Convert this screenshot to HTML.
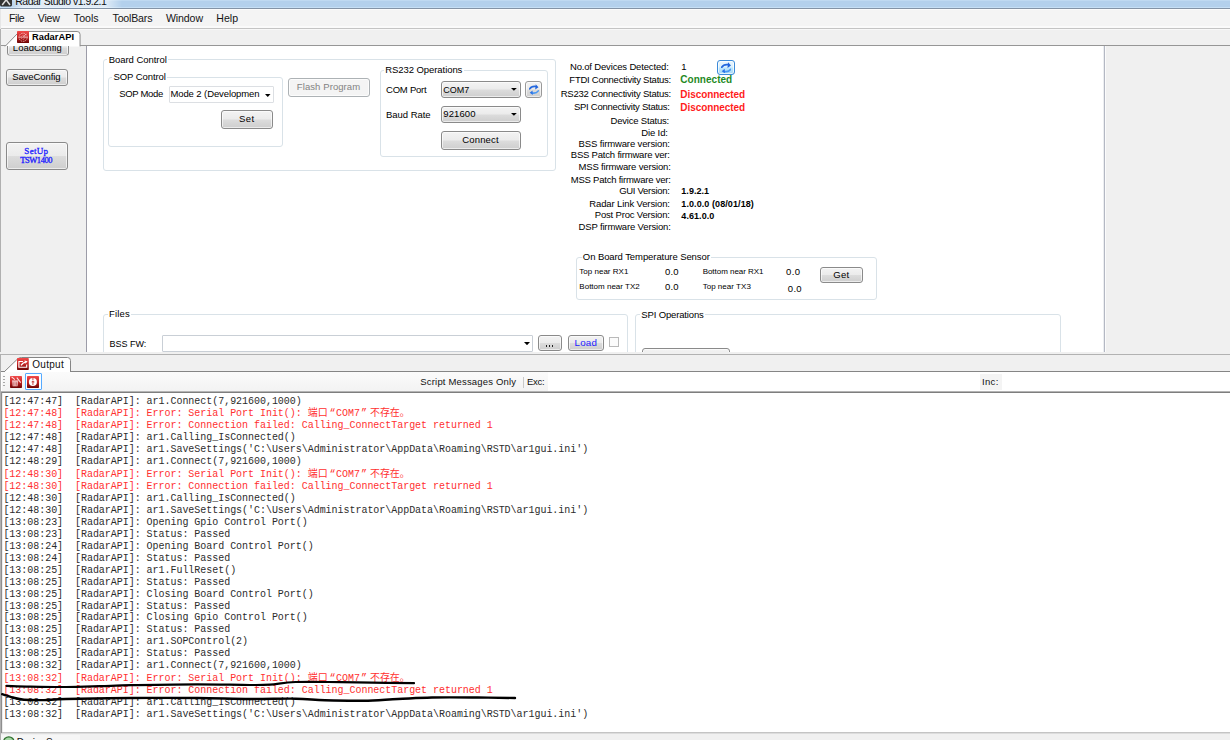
<!DOCTYPE html>
<html lang="en">
<head>
<meta charset="utf-8">
<title>Radar Studio v1.9.2.1</title>
<style>
html,body{margin:0;padding:0}
body{width:1230px;height:740px;overflow:hidden;position:relative;background:#f0f0f0;font-family:"Liberation Sans","Noto Sans CJK SC",sans-serif;font-size:9.5px;color:#000}
#win{position:absolute;left:0;top:0;width:1230px;height:740px;overflow:hidden}
#win div,#win svg,#win span,#win pre{position:absolute;box-sizing:border-box;margin:0}
#win span,#win pre{white-space:pre;line-height:12px}
.m{font-family:"Liberation Mono","Noto Sans CJK SC",monospace;font-size:10px;letter-spacing:-0.034px;left:3.4px;color:#2c2c2c}
.m.r{color:#ff3030}
.m i{font-style:normal;position:static!important}
</style>
</head>
<body>
<div id="win">
<div style="left:0px;top:0px;width:1230px;height:8px;background:#b3d0ec;"></div>
<div style="left:0px;top:0px;width:1230px;height:1px;background:#bfd9f1;"></div>
<div style="left:0px;top:7px;width:1230px;height:1px;background:#c6dff5;"></div>
<div style="left:0px;top:8px;width:1230px;height:1px;background:#8393a6;"></div>
<div style="left:10px;top:0px;width:112px;height:8px;background:linear-gradient(90deg,rgba(255,255,255,0),rgba(255,255,255,.6) 12%,rgba(255,255,255,.6) 85%,rgba(255,255,255,0));"></div>
<svg style="left:0;top:0" width="13" height="8" viewBox="0 0 13 8"><path d="M0 0 H12 V5 Q12 6.4 10.6 6.4 H1.4 Q0 6.4 0 5 Z" fill="#333"/><path d="M2.2 5 L6 0 M10 5 L6.4 0" stroke="#ddd" stroke-width="1.5" fill="none"/></svg>
<div style="left:0px;top:9px;width:1230px;height:19px;background:#f4f4f4;"></div>
<div style="left:0px;top:9px;width:1230px;height:1px;background:#fbfbfb;"></div>
<div style="left:0px;top:26px;width:1230px;height:2px;background:#fafafa;"></div>
<div style="left:0px;top:28px;width:1230px;height:1px;background:#c4c4c4;"></div>
<div style="left:0px;top:29px;width:1230px;height:16px;background:#f0f0f0;"></div>
<div style="left:0px;top:29px;width:1230px;height:1px;background:#f8f8f8;"></div>
<div style="left:0px;top:45px;width:1230px;height:1px;background:#969696;"></div>
<div style="left:0px;top:46px;width:86px;height:307px;background:#f0f0f0;"></div>
<div style="left:86px;top:46px;width:1px;height:306px;background:#9c9ca8;"></div>
<div style="left:87px;top:46px;width:1017px;height:306px;background:#fff;"></div>
<div style="left:1103px;top:46px;width:1px;height:306px;background:#eceef1;"></div>
<div style="left:1104px;top:46px;width:1px;height:306px;background:#b4b8c3;"></div>
<div style="left:1105px;top:46px;width:1px;height:306px;background:#fbfbfb;"></div>
<div style="left:1106px;top:46px;width:124px;height:306px;background:#f0f0f0;"></div>
<div style="left:0px;top:352px;width:1230px;height:2px;background:#f0f0f0;"></div>
<div style="left:0px;top:354px;width:1230px;height:1px;background:#b2b2b2;"></div>
<div style="left:0px;top:355px;width:1230px;height:16px;background:#f0f0f0;"></div>
<div style="left:0px;top:371px;width:1230px;height:1px;background:#858585;"></div>
<div style="left:0px;top:372px;width:1230px;height:19px;background:#fff;"></div>
<div style="left:2px;top:372px;width:546px;height:19px;background:linear-gradient(#fbfbfb,#f3f3f3);"></div>
<div style="left:980px;top:374px;width:22px;height:16px;background:#f4f4f4;"></div>
<div style="left:0px;top:391px;width:1230px;height:1px;background:#b4b4b4;"></div>
<div style="left:0px;top:392px;width:1230px;height:1px;background:#7e7e7e;"></div>
<div style="left:0px;top:393px;width:1230px;height:339px;background:#fff;"></div>
<div style="left:0px;top:732px;width:1230px;height:1px;background:#c4c4c4;"></div>
<div style="left:0px;top:733px;width:1230px;height:1px;background:#dcdcdc;"></div>
<div style="left:0px;top:734px;width:1230px;height:6px;background:#f0f0f0;"></div>
<div style="left:0px;top:735px;width:80px;height:5px;background:#f6f6f6;"></div>
<div style="left:0px;top:9px;width:1px;height:20px;background:#e6e6e6;"></div>
<div style="left:0px;top:29px;width:1px;height:711px;background:#b0b0b0;"></div>
<div style="left:1px;top:392px;width:1px;height:341px;background:#8e8e8e;"></div>
<div style="left:2px;top:393px;width:1px;height:339px;background:#ececec;"></div>
<svg style="left:3px;top:29.6px" width="78.6" height="17.4" viewBox="0 0 78.6 17.4"><path d="M2.0 16.4 L15.0 3.0 Q16.5 1.5 19.0 1.5 L74.1 1.5 Q77.1 1.5 77.1 4.5 L77.1 16.4 Z" fill="#fff" stroke="none"/><path d="M2.0 16.4 L15.0 3.0 Q16.5 1.5 19.0 1.5 L74.1 1.5 Q77.1 1.5 77.1 4.5 L77.1 16.4" fill="none" stroke="#8c8c8c" stroke-width="1"/></svg>
<svg style="left:2px;top:356px" width="70" height="17" viewBox="0 0 70 17"><path d="M2.0 16.0 L15.5 3.0 Q17.0 1.5 19.5 1.5 L65.5 1.5 Q68.5 1.5 68.5 4.5 L68.5 16.0 Z" fill="#fff" stroke="none"/><path d="M2.0 16.0 L15.5 3.0 Q17.0 1.5 19.5 1.5 L65.5 1.5 Q68.5 1.5 68.5 4.5 L68.5 16.0" fill="none" stroke="#858585" stroke-width="1"/></svg>
<svg style="left:17px;top:31px" width="12.3" height="12" viewBox="0 0 12.3 12"><defs><linearGradient id="rg" x1="0" y1="0" x2="0" y2="1"><stop offset="0" stop-color="#f24a4a"/><stop offset="0.5" stop-color="#c42626"/><stop offset="1" stop-color="#6c0404"/></linearGradient></defs><rect width="12.3" height="12" rx="0.8" fill="url(#rg)"/><g fill="none" stroke="#f8c6c6" opacity=".9"><circle cx="6.1" cy="6.3" r="4.1" stroke-width="0.9" stroke-dasharray="1.5 0.9"/><circle cx="6.1" cy="6.3" r="2" stroke-width="0.7" stroke-dasharray="1.2 0.8"/><path d="M1.6 6.2 H10.6" stroke-width="0.8"/><path d="M6.1 6.3 L9.2 2.8" stroke-width="1"/></g></svg>
<svg style="left:17.2px;top:357.8px" width="11.8" height="12" viewBox="0 0 11.8 12"><rect width="11.8" height="12" rx="0.8" fill="url(#rg)"/><path d="M6 3.5 H1.9 V9.3 H9.7 V6.6" fill="none" stroke="#fff" stroke-width="1.15"/><path d="M4 7.3 Q5.6 4.6 8.4 4.1" fill="none" stroke="#fff" stroke-width="1.4"/><path d="M7.4 2.6 L10.6 3.3 L8.6 5.7 Z" fill="#fff"/></svg>
<div style="left:3px;top:376px;width:1.5px;height:1.2px;background:#a8a8a8;"></div><div style="left:3px;top:379px;width:1.5px;height:1.2px;background:#a8a8a8;"></div><div style="left:3px;top:382px;width:1.5px;height:1.2px;background:#a8a8a8;"></div><div style="left:3px;top:385px;width:1.5px;height:1.2px;background:#a8a8a8;"></div>
<svg style="left:10px;top:375.6px" width="12" height="12" viewBox="0 0 12 12"><rect width="12" height="12" rx="0.8" fill="url(#rg)"/><path d="M2.3 5.6 H7.9 L7.5 10.2 H2.7 Z" fill="#f6d2d2"/><path d="M2 5 H8.2" stroke="#fff" stroke-width="0.9"/><path d="M1.6 0.9 L4.9 3.6 M6.8 1.6 L10.7 6.7" stroke="#fbe4e4" stroke-width="1.1"/><path d="M3.7 6.2 V9.8 M5.1 6.2 V9.8 M6.5 6.2 V9.8" stroke="#b02a2a" stroke-width="0.55"/></svg>
<div style="left:24.8px;top:373.2px;width:17.2px;height:16.6px;border:1.4px solid #55aaff;border-radius:1px;background:#fbfdff;"></div>
<svg style="left:27px;top:375.6px" width="12" height="12" viewBox="0 0 12 12"><rect width="12" height="12" rx="0.8" fill="url(#rg)"/><circle cx="5.9" cy="6" r="4" fill="#fff"/><path d="M5.9 2.2 V9.8" stroke="#c43030" stroke-width="1.2" stroke-dasharray="1.5 1"/><path d="M4.7 6 H7.3" stroke="#c43030" stroke-width="1.1"/></svg>
<div style="left:523px;top:377px;width:1px;height:11px;background:#c9c9c9;"></div>
<div style="left:7px;top:39px;width:62px;height:16.5px;border:1px solid #8a8a8a;border-radius:3px;background:linear-gradient(#f3f3f3 0,#ebebeb 48%,#dcdcdc 52%,#cecece 100%);box-shadow:inset 0 0 0 .8px rgba(255,255,255,.8);clip-path:inset(7px 0 0 0);"></div>
<div style="left:6px;top:69px;width:62px;height:16.5px;border:1px solid #8a8a8a;border-radius:3px;background:linear-gradient(#f3f3f3 0,#ebebeb 48%,#dcdcdc 52%,#cecece 100%);box-shadow:inset 0 0 0 .8px rgba(255,255,255,.8);"></div>
<div style="left:6px;top:141.5px;width:62px;height:28px;border:1px solid #8a8a8a;border-radius:3px;background:linear-gradient(#f3f3f3 0,#ebebeb 48%,#dcdcdc 52%,#cecece 100%);box-shadow:inset 0 0 0 .8px rgba(255,255,255,.8);"></div>
<div style="left:102.5px;top:59px;width:453.5px;height:111.5px;border:1px solid #d9e2e8;border-radius:3px;"></div><div style="left:107.3px;top:58px;width:60.89999999999999px;height:3px;background:#fff;"></div>
<div style="left:108px;top:76.5px;width:175px;height:70.5px;border:1px solid #d9e2e8;border-radius:3px;"></div><div style="left:112.2px;top:75.5px;width:54.999999999999986px;height:3px;background:#fff;"></div>
<div style="left:169px;top:86px;width:105px;height:17px;border:1px solid #dcdfe3;background:#fff;border-radius:1px;"></div>
<svg style="left:265px;top:93.5px" width="5.5" height="3" viewBox="0 0 5.5 3"><path d="M0 0 H5.5 L2.75 3 Z" fill="#000"/></svg>
<div style="left:220.5px;top:110px;width:52.5px;height:19px;border:1px solid #8a8a8a;border-radius:3px;background:linear-gradient(#f3f3f3 0,#ebebeb 48%,#dcdcdc 52%,#cecece 100%);box-shadow:inset 0 0 0 .8px rgba(255,255,255,.8);"></div>
<div style="left:288px;top:78px;width:82px;height:18.5px;border:1px solid #adb2b5;border-radius:3px;background:#f4f4f4;box-shadow:inset 0 0 0 1px #fcfcfc;"></div>
<div style="left:379.5px;top:69.5px;width:168.5px;height:87px;border:1px solid #d9e2e8;border-radius:3px;"></div><div style="left:384px;top:68.5px;width:79.69999999999999px;height:3px;background:#fff;"></div>
<div style="left:440.5px;top:81px;width:80.5px;height:16.5px;border:1px solid #8a8a8a;border-radius:3px;background:linear-gradient(#f3f3f3 0,#ebebeb 48%,#dcdcdc 52%,#cecece 100%);box-shadow:inset 0 0 0 .8px rgba(255,255,255,.8);"></div>
<svg style="left:511px;top:88.3px" width="5.8" height="2.8" viewBox="0 0 5.8 2.8"><path d="M0 0 H5.8 L2.9 2.8 Z" fill="#000"/></svg>
<div style="left:525px;top:81.3px;width:16.8px;height:16.4px;border:1px solid #8a8a8a;border-radius:3px;background:linear-gradient(#f3f3f3 0,#ebebeb 48%,#dcdcdc 52%,#cecece 100%);box-shadow:inset 0 0 0 .8px rgba(255,255,255,.8);border-color:#999;"></div>
<svg style="left:528.5px;top:84px" width="10" height="11.0" viewBox="0 0 10 11"><path d="M0.7 4.9 Q2.6 1.9 6.8 2.5" fill="none" stroke="#2468de" stroke-width="1.7" stroke-linecap="round"/><path d="M6.7 0.3 L9.5 3.2 L6.2 5.6 Z" fill="#1f63dc"/><path d="M9.3 6.9 Q7.2 9.8 3.2 9" fill="none" stroke="#4a98f2" stroke-width="1.6" stroke-linecap="round"/><path d="M3.5 6.5 L0.7 8.7 L3.8 10.9 Z" fill="#2a72e6"/></svg>
<div style="left:440.5px;top:105.5px;width:80.5px;height:17px;border:1px solid #8a8a8a;border-radius:3px;background:linear-gradient(#f3f3f3 0,#ebebeb 48%,#dcdcdc 52%,#cecece 100%);box-shadow:inset 0 0 0 .8px rgba(255,255,255,.8);"></div>
<svg style="left:511px;top:112.8px" width="5.8" height="2.8" viewBox="0 0 5.8 2.8"><path d="M0 0 H5.8 L2.9 2.8 Z" fill="#000"/></svg>
<div style="left:441px;top:131px;width:80px;height:18.5px;border:1px solid #8a8a8a;border-radius:3px;background:linear-gradient(#f3f3f3 0,#ebebeb 48%,#dcdcdc 52%,#cecece 100%);box-shadow:inset 0 0 0 .8px rgba(255,255,255,.8);"></div>
<div style="left:716.5px;top:60px;width:18.5px;height:15px;border:1px solid #3c8ad8;border-radius:3px;background:linear-gradient(#eaf6fd,#d9f0fc 48%,#bee6fd 52%,#a7d9f5);box-shadow:inset 0 0 0 1px rgba(255,255,255,.7);"></div>
<svg style="left:720.8px;top:61.6px" width="10.5" height="11.6" viewBox="0 0 10 11"><path d="M0.7 4.9 Q2.6 1.9 6.8 2.5" fill="none" stroke="#2468de" stroke-width="1.7" stroke-linecap="round"/><path d="M6.7 0.3 L9.5 3.2 L6.2 5.6 Z" fill="#1f63dc"/><path d="M9.3 6.9 Q7.2 9.8 3.2 9" fill="none" stroke="#4a98f2" stroke-width="1.6" stroke-linecap="round"/><path d="M3.5 6.5 L0.7 8.7 L3.8 10.9 Z" fill="#2a72e6"/></svg>
<div style="left:576px;top:256.5px;width:301px;height:43px;border:1px solid #d9e2e8;border-radius:3px;"></div><div style="left:581.5px;top:255.5px;width:129.70000000000005px;height:3px;background:#fff;"></div>
<div style="left:820.3px;top:267px;width:42.5px;height:15.5px;border:1px solid #8a8a8a;border-radius:3px;background:linear-gradient(#f3f3f3 0,#ebebeb 48%,#dcdcdc 52%,#cecece 100%);box-shadow:inset 0 0 0 .8px rgba(255,255,255,.8);"></div>
<div style="left:87px;top:300px;width:1017px;height:52px;overflow:hidden;"><div style="left:15.5px;top:14px;width:525px;height:60px;border:1px solid #d9e2e8;border-radius:3px;"></div><div style="left:20.599999999999994px;top:13px;width:23.5px;height:3px;background:#fff;"></div><div style="left:548.3px;top:14px;width:425.5px;height:60px;border:1px solid #d9e2e8;border-radius:3px;"></div><div style="left:553px;top:13px;width:65.2px;height:3px;background:#fff;"></div><div style="left:74.5px;top:34.5px;width:371.5px;height:17px;border:1px solid #c9cfd6;background:#fff;border-radius:1px;"></div><div style="left:451.4px;top:35.39999999999998px;width:23.2px;height:15.3px;border:1px solid #8a8a8a;border-radius:3px;background:linear-gradient(#f3f3f3 0,#ebebeb 48%,#dcdcdc 52%,#cecece 100%);box-shadow:inset 0 0 0 .8px rgba(255,255,255,.8);"></div><div style="left:481.29999999999995px;top:35.39999999999998px;width:35.3px;height:15.3px;border:1px solid #8a8a8a;border-radius:3px;background:linear-gradient(#f3f3f3 0,#ebebeb 48%,#dcdcdc 52%,#cecece 100%);box-shadow:inset 0 0 0 .8px rgba(255,255,255,.8);"></div><div style="left:522px;top:37px;width:10px;height:9.6px;border:1px solid #b9b9b9;background:#fbfbfb;"></div><div style="left:554.6px;top:48.30000000000001px;width:88px;height:16px;border:1px solid #8a8a8a;border-radius:3px;background:linear-gradient(#f3f3f3 0,#ebebeb 48%,#dcdcdc 52%,#cecece 100%);box-shadow:inset 0 0 0 .8px rgba(255,255,255,.8);"></div></div>
<svg style="left:524px;top:342px" width="6" height="3.2" viewBox="0 0 6 3.2"><path d="M0 0 H6 L3.0 3.2 Z" fill="#000"/></svg>
<div style="left:546px;top:345.3px;width:1.4px;height:1.3px;background:#222;"></div><div style="left:549px;top:345.3px;width:1.4px;height:1.3px;background:#222;"></div><div style="left:552px;top:345.3px;width:1.4px;height:1.3px;background:#222;"></div>
<div style="left:0px;top:352px;width:1230px;height:2px;background:#f0f0f0;"></div>
<span style="left:15.27px;top:-5.14px;font-size:10.5px;letter-spacing:-0.505px;color:#101010;">Radar Studio v1.9.2.1</span>
<span style="left:9.06px;top:11.93px;font-size:10.6px;letter-spacing:-0.498px;color:#151515;">File</span>
<span style="left:37.76px;top:11.93px;font-size:10.6px;letter-spacing:-0.199px;color:#151515;">View</span>
<span style="left:73.86px;top:11.93px;font-size:10.6px;letter-spacing:0.012px;color:#151515;">Tools</span>
<span style="left:112.56px;top:11.93px;font-size:10.6px;letter-spacing:-0.191px;color:#151515;">ToolBars</span>
<span style="left:165.96px;top:11.93px;font-size:10.6px;letter-spacing:-0.121px;color:#151515;">Window</span>
<span style="left:216.26px;top:11.93px;font-size:10.6px;letter-spacing:-0.004px;color:#151515;">Help</span>
<span style="left:31.95px;top:31.28px;font-size:9.3px;letter-spacing:0.035px;font-weight:700;">RadarAPI</span>
<span style="left:32.30px;top:358.54px;font-size:10px;letter-spacing:0.274px;color:#101010;">Output</span>
<span style="left:420.33px;top:375.51px;font-size:9.5px;letter-spacing:0.175px;color:#111;">Script Messages Only</span>
<span style="left:526.94px;top:375.51px;font-size:9.5px;letter-spacing:-0.285px;color:#111;">Exc:</span>
<span style="left:981.94px;top:375.51px;font-size:9.5px;letter-spacing:0.339px;color:#111;">Inc:</span>
<span style="left:12.84px;top:41.71px;font-size:9.5px;letter-spacing:0.036px;clip-path:inset(4.29px 0 0 0);">LoadConfig</span>
<span style="left:12.14px;top:70.51px;font-size:9.5px;letter-spacing:-0.066px;">SaveConfig</span>
<span style="left:24.37px;top:144.96px;font-size:9px;letter-spacing:0.265px;color:#1a1aff;font-family:'Liberation Serif','Noto Serif CJK SC',serif;-webkit-text-stroke:0.3px #1a1aff;">SetUp</span>
<span style="left:20.21px;top:154.13px;font-size:8.5px;letter-spacing:-0.427px;color:#1a1aff;font-family:'Liberation Serif','Noto Serif CJK SC',serif;-webkit-text-stroke:0.3px #1a1aff;">TSW1400</span>
<span style="left:108.63px;top:53.71px;font-size:9.5px;letter-spacing:-0.033px;">Board Control</span>
<span style="left:113.53px;top:70.71px;font-size:9.5px;letter-spacing:-0.083px;">SOP Control</span>
<span style="left:119.13px;top:88.31px;font-size:9.5px;letter-spacing:-0.310px;">SOP Mode</span>
<span style="left:170.44px;top:88.01px;font-size:9.5px;letter-spacing:-0.100px;">Mode 2 (Developmen</span>
<span style="left:238.94px;top:113.01px;font-size:9.5px;letter-spacing:0.482px;">Set</span>
<span style="left:296.83px;top:81.01px;font-size:9.5px;letter-spacing:0.085px;color:#838383;">Flash Program</span>
<span style="left:385.33px;top:64.01px;font-size:9.5px;letter-spacing:-0.076px;">RS232 Operations</span>
<span style="left:386.03px;top:84.01px;font-size:9.5px;letter-spacing:-0.229px;">COM Port</span>
<span style="left:386.03px;top:108.71px;font-size:9.5px;letter-spacing:-0.035px;">Baud Rate</span>
<span style="left:443.37px;top:83.88px;font-size:9px;letter-spacing:-0.052px;">COM7</span>
<span style="left:443.33px;top:108.11px;font-size:9.5px;letter-spacing:0.085px;">921600</span>
<span style="left:462.23px;top:133.81px;font-size:9.5px;letter-spacing:0.173px;">Connect</span>
<span style="left:569.94px;top:60.71px;font-size:9.5px;letter-spacing:-0.164px;">No.of Devices Detected:</span>
<span style="left:569.34px;top:73.71px;font-size:9.5px;letter-spacing:-0.241px;">FTDI Connectivity Status:</span>
<span style="left:560.63px;top:88.31px;font-size:9.5px;letter-spacing:-0.201px;">RS232 Connectivity Status:</span>
<span style="left:573.94px;top:101.31px;font-size:9.5px;letter-spacing:-0.256px;">SPI Connectivity Status:</span>
<span style="left:610.54px;top:115.11px;font-size:9.5px;letter-spacing:-0.194px;">Device Status:</span>
<span style="left:641.13px;top:127.01px;font-size:9.5px;letter-spacing:-0.106px;">Die Id:</span>
<span style="left:578.54px;top:137.91px;font-size:9.5px;letter-spacing:-0.128px;">BSS firmware version:</span>
<span style="left:570.74px;top:149.31px;font-size:9.5px;letter-spacing:-0.193px;">BSS Patch firmware ver:</span>
<span style="left:578.54px;top:161.11px;font-size:9.5px;letter-spacing:-0.162px;">MSS firmware version:</span>
<span style="left:570.74px;top:173.71px;font-size:9.5px;letter-spacing:-0.224px;">MSS Patch firmware ver:</span>
<span style="left:619.13px;top:185.01px;font-size:9.5px;letter-spacing:-0.275px;">GUI Version:</span>
<span style="left:589.34px;top:197.61px;font-size:9.5px;letter-spacing:-0.127px;">Radar Link Version:</span>
<span style="left:594.74px;top:209.41px;font-size:9.5px;letter-spacing:-0.172px;">Post Proc Version:</span>
<span style="left:578.54px;top:220.81px;font-size:9.5px;letter-spacing:-0.153px;">DSP firmware Version:</span>
<span style="left:681.34px;top:60.71px;font-size:9.5px;letter-spacing:0.033px;">1</span>
<span style="left:680.30px;top:74.33px;font-size:10px;letter-spacing:0.029px;font-weight:700;color:#1f8a1f;">Connected</span>
<span style="left:680.30px;top:89.13px;font-size:10px;letter-spacing:-0.062px;font-weight:700;color:#ff1c1c;">Disconnected</span>
<span style="left:680.30px;top:102.13px;font-size:10px;letter-spacing:-0.062px;font-weight:700;color:#ff1c1c;">Disconnected</span>
<span style="left:681.37px;top:185.18px;font-size:9px;letter-spacing:0.005px;font-weight:700;">1.9.2.1</span>
<span style="left:681.37px;top:198.28px;font-size:9px;letter-spacing:0.082px;font-weight:700;">1.0.0.0 (08/01/18)</span>
<span style="left:681.37px;top:210.48px;font-size:9px;letter-spacing:0.061px;font-weight:700;">4.61.0.0</span>
<span style="left:582.84px;top:250.81px;font-size:9.5px;letter-spacing:-0.084px;">On Board Temperature Sensor</span>
<span style="left:579.34px;top:265.63px;font-size:8px;letter-spacing:0.009px;">Top near RX1</span>
<span style="left:665.04px;top:265.51px;font-size:9.5px;letter-spacing:0.206px;">0.0</span>
<span style="left:702.64px;top:266.03px;font-size:8px;letter-spacing:-0.033px;">Bottom near RX1</span>
<span style="left:786.04px;top:266.01px;font-size:9.5px;letter-spacing:0.456px;">0.0</span>
<span style="left:833.34px;top:268.71px;font-size:9.5px;letter-spacing:0.209px;">Get</span>
<span style="left:579.34px;top:280.73px;font-size:8px;letter-spacing:0.007px;">Bottom near TX2</span>
<span style="left:665.04px;top:281.01px;font-size:9.5px;letter-spacing:0.206px;">0.0</span>
<span style="left:702.64px;top:280.73px;font-size:8px;letter-spacing:0.030px;">Top near TX3</span>
<span style="left:787.84px;top:283.11px;font-size:9.5px;letter-spacing:0.306px;">0.0</span>
<span style="left:108.93px;top:308.31px;font-size:9.5px;letter-spacing:0.192px;">Files</span>
<span style="left:109.57px;top:337.68px;font-size:9px;letter-spacing:-0.014px;">BSS FW:</span>
<span style="left:574.51px;top:337.10px;font-size:9.8px;letter-spacing:0.192px;color:#2222ff;">Load</span>
<span style="left:641.34px;top:308.51px;font-size:9.5px;letter-spacing:-0.146px;">SPI Operations</span>
<span style="left:16.80px;top:737.13px;font-size:10px;letter-spacing:-0.576px;color:#111;">Device Server</span>
<pre class="m" style="top:395.53px">[12:47:47]  [RadarAPI]: ar1.Connect(7,921600,1000)</pre>
<pre class="m r" style="top:408.16px">[12:47:48]  [RadarAPI]: Error: Serial Port Init(): 端口<i style="margin:0 .7px 0 1.8px">“</i>COM7<i style="margin:0 2.9px 0 1.1px">”</i>不存在。</pre>
<pre class="m r" style="top:420.14px">[12:47:48]  [RadarAPI]: Error: Connection failed: Calling_ConnectTarget returned 1</pre>
<pre class="m" style="top:432.12px">[12:47:48]  [RadarAPI]: ar1.Calling_IsConnected()</pre>
<pre class="m" style="top:444.10px">[12:47:48]  [RadarAPI]: ar1.SaveSettings('C:\Users\Administrator\AppData\Roaming\RSTD\ar1gui.ini')</pre>
<pre class="m" style="top:456.08px">[12:48:29]  [RadarAPI]: ar1.Connect(7,921600,1000)</pre>
<pre class="m r" style="top:468.71px">[12:48:30]  [RadarAPI]: Error: Serial Port Init(): 端口<i style="margin:0 .7px 0 1.8px">“</i>COM7<i style="margin:0 2.9px 0 1.1px">”</i>不存在。</pre>
<pre class="m r" style="top:480.69px">[12:48:30]  [RadarAPI]: Error: Connection failed: Calling_ConnectTarget returned 1</pre>
<pre class="m" style="top:492.67px">[12:48:30]  [RadarAPI]: ar1.Calling_IsConnected()</pre>
<pre class="m" style="top:504.65px">[12:48:30]  [RadarAPI]: ar1.SaveSettings('C:\Users\Administrator\AppData\Roaming\RSTD\ar1gui.ini')</pre>
<pre class="m" style="top:516.63px">[13:08:23]  [RadarAPI]: Opening Gpio Control Port()</pre>
<pre class="m" style="top:528.62px">[13:08:23]  [RadarAPI]: Status: Passed</pre>
<pre class="m" style="top:540.60px">[13:08:24]  [RadarAPI]: Opening Board Control Port()</pre>
<pre class="m" style="top:552.58px">[13:08:24]  [RadarAPI]: Status: Passed</pre>
<pre class="m" style="top:564.55px">[13:08:25]  [RadarAPI]: ar1.FullReset()</pre>
<pre class="m" style="top:576.53px">[13:08:25]  [RadarAPI]: Status: Passed</pre>
<pre class="m" style="top:588.51px">[13:08:25]  [RadarAPI]: Closing Board Control Port()</pre>
<pre class="m" style="top:600.50px">[13:08:25]  [RadarAPI]: Status: Passed</pre>
<pre class="m" style="top:612.48px">[13:08:25]  [RadarAPI]: Closing Gpio Control Port()</pre>
<pre class="m" style="top:624.45px">[13:08:25]  [RadarAPI]: Status: Passed</pre>
<pre class="m" style="top:636.43px">[13:08:25]  [RadarAPI]: ar1.SOPControl(2)</pre>
<pre class="m" style="top:648.41px">[13:08:25]  [RadarAPI]: Status: Passed</pre>
<pre class="m" style="top:660.39px">[13:08:32]  [RadarAPI]: ar1.Connect(7,921600,1000)</pre>
<pre class="m r" style="top:673.03px">[13:08:32]  [RadarAPI]: Error: Serial Port Init(): 端口<i style="margin:0 .7px 0 1.8px">“</i>COM7<i style="margin:0 2.9px 0 1.1px">”</i>不存在。</pre>
<pre class="m r" style="top:685.01px">[13:08:32]  [RadarAPI]: Error: Connection failed: Calling_ConnectTarget returned 1</pre>
<pre class="m" style="top:696.99px">[13:08:32]  [RadarAPI]: ar1.Calling_IsConnected()</pre>
<pre class="m" style="top:708.97px">[13:08:32]  [RadarAPI]: ar1.SaveSettings('C:\Users\Administrator\AppData\Roaming\RSTD\ar1gui.ini')</pre>
<svg style="left:0;top:670px" width="540" height="45" viewBox="0 670 540 45"><path d="M6.6 685.9 C10.5 686.0 20.1 686.4 30.0 686.6 C39.9 686.8 54.3 687.1 66.0 687.0 C77.7 686.9 89.0 686.5 100.0 686.2 C111.0 685.9 115.4 685.5 131.7 685.2 C147.9 684.9 177.8 684.3 197.5 684.3 C217.2 684.3 237.9 685.0 250.0 685.0 C262.1 685.0 262.4 685.1 270.0 684.6 C277.6 684.1 283.7 682.4 295.5 682.0 C307.3 681.6 325.8 682.0 341.0 682.1 C356.2 682.2 374.4 682.6 386.6 682.8 C398.8 683.0 409.4 683.1 414.0 683.2" fill="none" stroke="#000" stroke-width="2.2" stroke-linecap="round" stroke-linejoin="round"/><path d="M2.2 694.2 C3.0 694.4 5.2 695.1 7.0 695.6 C8.8 696.1 10.2 696.8 13.0 697.5 C15.8 698.2 18.8 699.3 24.0 699.7 C29.2 700.1 37.0 700.2 44.0 700.1 C51.0 700.0 51.4 699.4 66.0 699.0 C80.6 698.6 109.8 698.2 131.7 698.0 C153.6 697.8 177.8 697.8 197.5 698.0 C217.2 698.2 233.7 698.9 250.0 699.0 C266.3 699.1 283.0 698.5 295.5 698.7 C308.0 698.9 313.6 700.0 325.0 700.3 C336.4 700.6 351.6 700.9 363.8 700.7 C376.0 700.5 386.6 699.5 398.0 699.0 C409.4 698.5 418.7 697.8 432.0 697.5 C445.3 697.2 463.8 697.4 477.6 697.5 C491.4 697.6 508.8 697.9 515.0 698.0" fill="none" stroke="#000" stroke-width="2.4" stroke-linecap="round" stroke-linejoin="round"/></svg>
<svg style="left:3px;top:736px" width="12" height="4" viewBox="0 0 12 4"><circle cx="5.8" cy="6" r="5.2" fill="#a5d8a5" stroke="#2f6f2f" stroke-width="1.3"/></svg>
</div>
</body>
</html>
